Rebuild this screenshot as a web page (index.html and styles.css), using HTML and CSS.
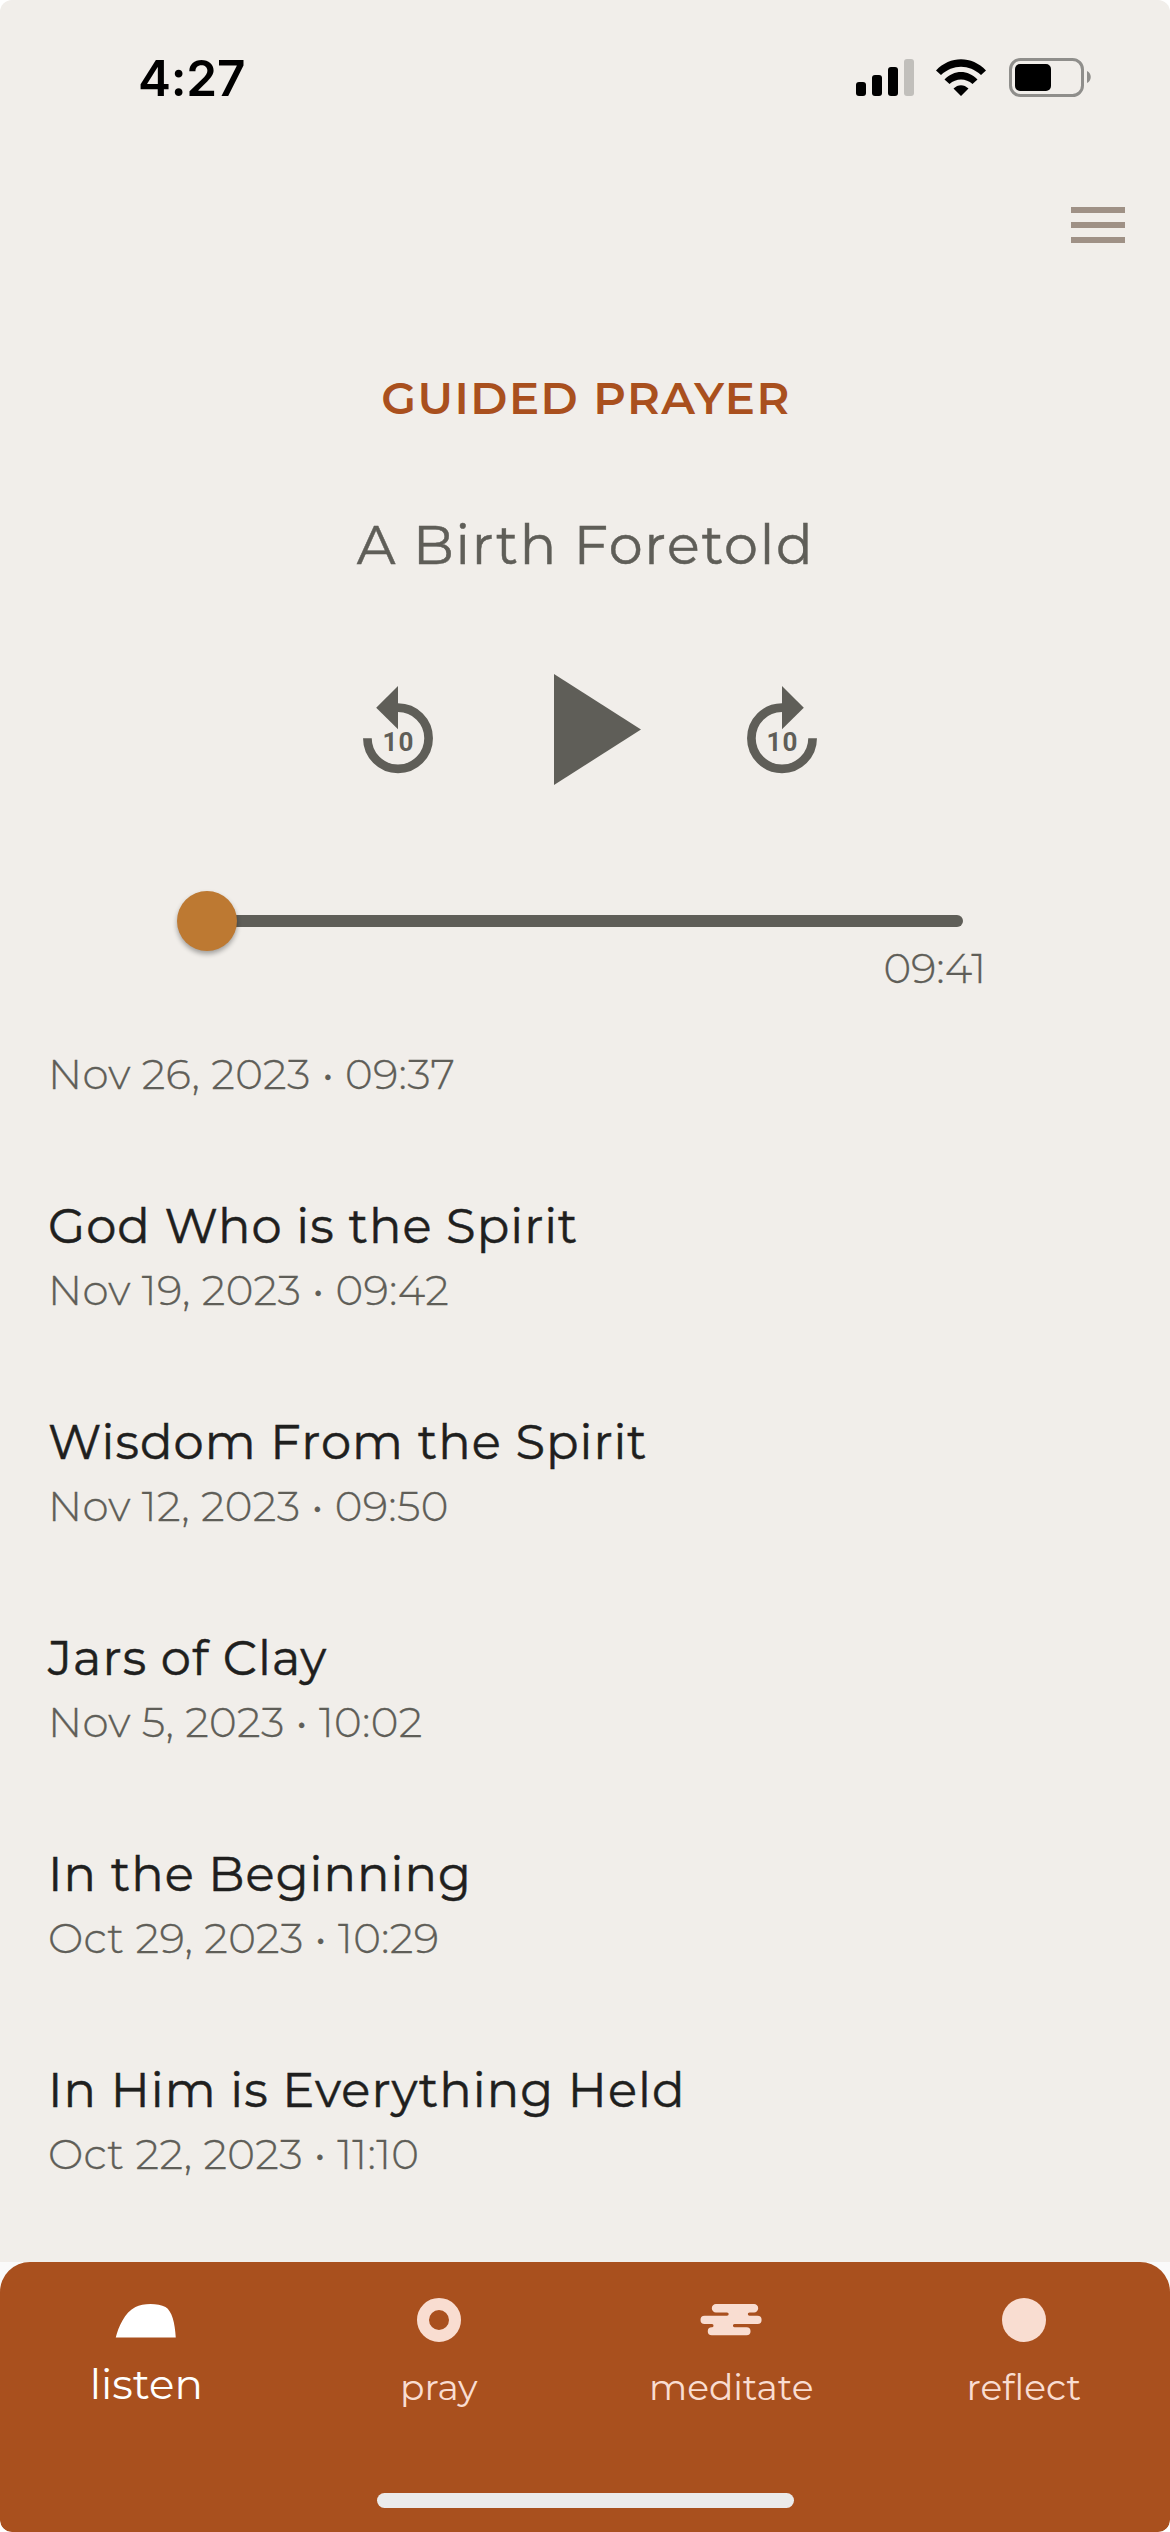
FILE: index.html
```html
<!DOCTYPE html>
<html lang="en">
<head>
<meta charset="utf-8">
<title>Guided Prayer</title>
<link rel="stylesheet" href="styles.css">
</head>
<body>
<div class="screen">
  <header class="status">
    <span class="clock">4:27</span>
    <div class="indicators">
      <svg class="signal" width="58" height="38" viewBox="0 0 58 38"><rect y="23" width="10" height="14" rx="3"/><rect x="16" y="16" width="10" height="21" rx="3"/><rect x="32" y="8" width="10" height="29" rx="3"/><rect x="48" width="10" height="37" rx="3" fill="#c1bfbb"/></svg>
      <svg class="wifi" width="53" height="38" viewBox="0 0 53 38"><path d="M1 11.500C15-3.500 37-3.500 51 11.500L46 16C34 5 18 5 6 16ZM9.500 20.500C19 10.500 33 10.500 42.500 20.500L37.500 25C31 19 21 19 14.500 25ZM18.500 29.500C23 25 29 25 33.500 29.500L26 37Z"/></svg>
      <svg width="83" height="39" viewBox="0 0 83 39"><rect x="1.500" y="1.500" width="72" height="36" rx="10" fill="none" stroke="#8f8e8b" stroke-width="3"/><rect x="6" y="6" width="36" height="27" rx="5"/><path d="M78 13C83 15 83 23 78 25Z" fill="#8f8e8b"/></svg>
    </div>
  </header>
  <div class="menu"><i></i><i></i><i></i></div>
  <main>
    <h1>GUIDED PRAYER</h1>
    <h2>A Birth Foretold</h2>
    <div class="controls">
      <svg width="70" height="88" viewBox="0 0 70 88"><path d="M35 21.700A30.600 30.600 0 1 1 4.400 52.300" class="ring"/><path d="M35 0V43.300L13.200 21.700Z"/><text x="35.500" y="65">10</text></svg>
      <svg width="87" height="111" viewBox="0 0 87 111"><path d="M0 0L87 55.500L0 111Z"/></svg>
      <svg width="70" height="88" viewBox="0 0 70 88"><path d="M35 21.700A30.600 30.600 0 1 0 65.600 52.300" class="ring"/><path d="M35 0V43.300L56.800 21.700Z"/><text x="35.500" y="65">10</text></svg>
    </div>
    <div class="slider"><div class="thumb"></div><div class="track"></div></div>
    <div class="duration">09:41</div>
    <ul class="episodes">
      <li><p>Nov 26, 2023 • 09:37</p></li>
      <li><h3>God Who is the Spirit</h3><p>Nov 19, 2023 • 09:42</p></li>
      <li><h3>Wisdom From the Spirit</h3><p>Nov 12, 2023 • 09:50</p></li>
      <li><h3>Jars of Clay</h3><p>Nov 5, 2023 • 10:02</p></li>
      <li><h3>In the Beginning</h3><p>Oct 29, 2023 • 10:29</p></li>
      <li><h3>In Him is Everything Held</h3><p>Oct 22, 2023 • 11:10</p></li>
    </ul>
  </main>
  <div class="dock">
    <nav>
      <a class="active"><svg width="62" height="46" viewBox="0 0 62 46"><path d="M.750 40.500C3.500 30 9.500 15.500 20.500 10C28 6 43 6 50.500 10C57 14 60 26 60.750 40.500Z"/></svg><span>listen</span></a>
      <a><svg width="62" height="46" viewBox="0 0 62 46"><circle cx="31" cy="23" r="16" fill="none" stroke="#f9ddd1" stroke-width="12"/></svg><span>pray</span></a>
      <a><svg width="62" height="46" viewBox="0 0 62 46"><path d="M16 7H54A4.200 4.200 0 0 1 54 15.400H49.500A1.700 1.700 0 0 0 49.500 18.800H57.500A4.100 4.100 0 0 1 57.500 27H34.500A1.600 1.600 0 0 0 34.500 30.200H46.500A4 4 0 0 1 46.500 38.300H11.800A4 4 0 0 1 11.800 30.200A1.600 1.600 0 0 0 12 27H4.600A4.100 4.100 0 0 1 4.600 18.800H27A1.700 1.700 0 0 0 27 15.400H16A4.200 4.200 0 0 1 16 7Z"/></svg><span>meditate</span></a>
      <a><svg width="62" height="46" viewBox="0 0 62 46"><circle cx="31" cy="23" r="22"/></svg><span>reflect</span></a>
    </nav>
    <div class="home"></div>
  </div>
</div>
</body>
</html>
```
FILE: styles.css
```css
* { box-sizing: border-box; margin: 0; padding: 0; }
body { background: #fff; font-family: Montserrat, Inter, sans-serif; color: #5f5e58; }
svg { display: block; fill: currentColor; }
.screen { width: 1170px; height: 2532px; background: #f1eeea; border-radius: 12px; overflow: hidden; display: flex; flex-direction: column; }
.status { height: 159px; padding: 46px 78px 0 138px; display: flex; justify-content: space-between; align-items: flex-start; color: #000; }
.clock { font: 600 49.500px/64px Inter, sans-serif; letter-spacing: -0.200px; }
.indicators { display: flex; gap: 21px; padding-top: 12px; }
.signal, .wifi { margin-top: 1px; }
.menu { height: 84px; padding: 48px 45px 0 0; display: flex; flex-direction: column; align-items: flex-end; gap: 9px; flex: none; }
.menu i { width: 54px; height: 6px; background: #9f9186; flex: none; }
main { flex: 1; min-height: 0; display: flex; flex-direction: column; }
h1 { margin-top: 125px; text-align: center; font-size: 45px; line-height: 60px; font-weight: 600; color: #a9501e; letter-spacing: 1.500px; padding-left: 2px; }
h2 { margin-top: 84px; text-align: center; font-size: 54px; line-height: 66px; font-weight: 400; letter-spacing: 1.750px; padding-left: 1px; -webkit-text-stroke: 0.500px; }
.controls { display: flex; justify-content: center; gap: 112px; margin-top: 95.500px; padding-left: 9px; height: 111px; }
.controls svg { margin-top: 12px; }
.controls svg:nth-child(2) { margin: 0 -6px 0 9px; }
.controls text { font: 700 26px Roboto, sans-serif; text-anchor: middle; letter-spacing: 1px; }
.ring { fill: none; stroke: currentColor; stroke-width: 8.700; }
.slider { display: flex; align-items: center; width: 786px; height: 60px; margin: 106.500px 0 0 177px; }
.thumb { width: 60px; height: 60px; border-radius: 50%; background: #bd7932; box-shadow: 0 3px 5px #0005; position: relative; }
.track { flex: 1; height: 12px; background: #5f5e58; border-radius: 0 6px 6px 0; margin-left: -4px; }
.duration { align-self: flex-end; margin: -8px 184px 0 0; font-size: 42px; line-height: 50px; font-weight: 300; -webkit-text-stroke: 0.300px; }
.episodes { list-style: none; padding-left: 48px; margin-top: 55px; }
.episodes li { margin-bottom: 95px; }
.episodes h3 { font-size: 48px; line-height: 60px; margin-bottom: 8px; font-weight: 400; color: #1f1f1e; letter-spacing: 1.050px; white-space: nowrap; -webkit-text-stroke: 0.500px; }
.episodes p { font-size: 42px; line-height: 53px; font-weight: 300; letter-spacing: 0.300px; -webkit-text-stroke: 0.300px; }
.dock { height: 270px; flex: none; background: #fafafa; display: flex; flex-direction: column; position: relative; z-index: 0; }
.dock::before { content: ""; position: absolute; inset: 0; z-index: -1; background: #a9501e; border-radius: 30px 30px 12px 12px; }
nav { display: grid; grid-template-columns: repeat(4, 1fr); height: 231px; padding-top: 35px; }
nav a { display: flex; flex-direction: column; align-items: center; color: #f9ddd1; font-size: 36px; line-height: 44px; }
nav a svg { margin-bottom: 22px; }
nav .active { color: #fff; font-size: 42px; }
nav .active svg { margin-bottom: 19px; }
.home { width: 417px; height: 15px; border-radius: 8px; background: #ebebeb; margin: 0 auto; }
```
